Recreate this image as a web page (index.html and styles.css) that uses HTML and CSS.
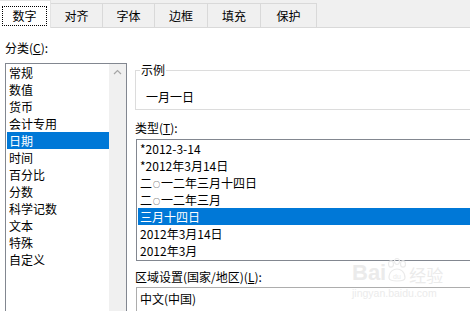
FILE: index.html
```html
<!DOCTYPE html>
<html lang="zh-CN">

<head>
    <meta charset="utf-8">
    <meta name="viewport" content="width=device-width, initial-scale=1.0">
    <title>设置单元格格式</title>

    <link rel="stylesheet" href="styles.css">
</head>

<body>
    <nav class="tabs">
        <button class="tab active"><span class="focus">数字</span></button>
        <button class="tab">对齐</button>
        <button class="tab">字体</button>
        <button class="tab">边框</button>
        <button class="tab">填充</button>
        <button class="tab">保护</button>
    </nav>

    <main class="pane">
        <section class="kategori">
            <label class="caption">分类(<u>C</u>):</label>
            <div class="listbox">
                <ul class="items">
                    <li>常规</li>
                    <li>数值</li>
                    <li>货币</li>
                    <li>会计专用</li>
                    <li class="selected">日期</li>
                    <li>时间</li>
                    <li>百分比</li>
                    <li>分数</li>
                    <li>科学记数</li>
                    <li>文本</li>
                    <li>特殊</li>
                    <li>自定义</li>
                </ul>
                <div class="scrollbar">
                    <svg width="17" height="17" viewBox="0 0 17 17">
                        <polyline points="5,10 8.5,6.5 12,10" fill="none" stroke="#a6a6a6" stroke-width="1.2"/>
                    </svg>
                </div>
            </div>
        </section>

        <section class="detalje">
            <fieldset class="sample">
                <legend>示例</legend>
                <p>一月一日</p>
            </fieldset>

            <label class="caption">类型(<u>T</u>):</label>
            <ul class="typelist">
                <li>*2012-3-14</li>
                <li>*2012年3月14日</li>
                <li>二<span class="zero">○</span>一二年三月十四日</li>
                <li>二<span class="zero">○</span>一二年三月</li>
                <li class="selected">三月十四日</li>
                <li>2012年3月14日</li>
                <li>2012年3月</li>
            </ul>

            <label class="caption">区域设置(国家/地区)(<u>L</u>):</label>
            <div class="combo">中文(中国)</div>
        </section>
    </main>

    <div class="watermark">
        <div class="logo">
            <span class="bai">Bai</span>
            <svg width="22" height="26" viewBox="0 0 22 26">
                <g fill="none" stroke="#ebebeb" stroke-width="1.2">
                    <ellipse cx="5" cy="6" rx="2.5" ry="3.2"/>
                    <ellipse cx="11" cy="3.5" rx="2.5" ry="3"/>
                    <ellipse cx="17" cy="6" rx="2.5" ry="3.2"/>
                    <path d="M3 20 C3 13 8 11 11 11 C14 11 19 13 19 20 C19 24 3 24 3 20 Z"/>
                </g>
                <text x="11" y="21" font-size="7" text-anchor="middle" fill="#ebebeb" font-family="Liberation Sans, sans-serif">du</text>
            </svg>
            <span class="jy">经验</span>
        </div>
        <small>jingyan.baidu.com</small>
    </div>
</body>

</html>
```

FILE: styles.css
```css
* {
    box-sizing: border-box;
}

body {
    margin: 0;
    width: 470px;
    height: 311px;
    overflow: hidden;
    position: relative;
    background: #fff;
    color: #000;
    font-family: "Noto Sans CJK SC", "Noto Sans", sans-serif;
    font-size: 12px;
}

/* faner */
.tabs {
    display: flex;
    align-items: flex-end;
    height: 28px;
    background: #f0f0f0;
    border-bottom: 1px solid #d9d9d9;
}

.tab {
    font: inherit;
    color: #000;
    height: 24px;
    padding: 0;
    background: #f0f0f0;
    border: 1px solid #d9d9d9;
    border-left: none;
    border-bottom: none;
    line-height: 21px;
}

.tab:nth-child(2) { width: 52px; }
.tab:nth-child(3) { width: 52px; }
.tab:nth-child(4) { width: 53px; }
.tab:nth-child(5) { width: 53px; }
.tab:nth-child(6) { width: 56px; }

.tab.active {
    width: 51px;
    height: 28px;
    margin-bottom: -1px;
    padding: 5px 3px 2px 2px;
    background: #fff;
    border-color: #e3e3e3;
}

.focus {
    display: block;
    height: 20px;
    line-height: 17px;
    border: 1px dotted #000;
}

/* indhold */
.pane {
    display: flex;
}

.caption {
    display: block;
    line-height: 16px;
    white-space: nowrap;
}

.kategori {
    flex: none;
    width: 127px;
    padding-left: 5px;
}

.kategori .caption {
    margin-top: 12px;
}

.listbox {
    display: flex;
    height: 248px;
    margin-top: 7px;
    border: 1px solid #828790;
    border-bottom: none;
}

.items {
    flex: 1;
    list-style: none;
    margin: 0;
    padding: 0 0 0 1px;
}

.items li,
.typelist li {
    height: 17px;
    line-height: 17px;
    padding-left: 2px;
    white-space: nowrap;
}

.zero {
    font-size: 7px;
    vertical-align: 1px;
    padding: 0 1px;
}

.selected {
    background: #0078d7;
    color: #fff;
}

.scrollbar {
    flex: none;
    width: 17px;
    background: #f0f0f0;
}

.scrollbar svg {
    display: block;
}

.detalje {
    flex: none;
    width: 345px;
    margin-left: 8px;
}

.sample {
    margin: 34px 0 0;
    padding: 11px 0 4px 10px;
    min-width: 0;
    border: 1px solid #dcdcdc;
}

.sample legend {
    padding: 0 1px;
    margin-left: -6px;
    line-height: 16px;
}

.sample p {
    margin: 0;
    line-height: 16px;
}

.sample + .caption {
    margin-top: 10px;
}

.typelist {
    list-style: none;
    margin: 3px 0 0 1px;
    padding: 0 0 1px 1px;
    border: 1px solid #828790;
}

.typelist + .caption {
    margin-top: 8px;
}

.combo {
    margin: 2px 0 0 1px;
    height: 24px;
    padding: 3px 3px 0;
    line-height: 16px;
    border: 1px solid #adadad;
    border-bottom: none;
}

/* vandmaerke */
.watermark {
    position: absolute;
    left: 352px;
    top: 258px;
    color: #ebebeb;
    line-height: 1;
}

.logo {
    display: flex;
    align-items: flex-end;
}

.bai {
    font-family: "Liberation Sans", sans-serif;
    font-weight: bold;
    font-size: 22px;
}

.jy {
    font-size: 17px;
    margin-left: 1px;
    margin-bottom: 1px;
}

.watermark small {
    display: block;
    margin-top: 4px;
    font-family: "Liberation Sans", sans-serif;
    font-size: 10.5px;
}
```
